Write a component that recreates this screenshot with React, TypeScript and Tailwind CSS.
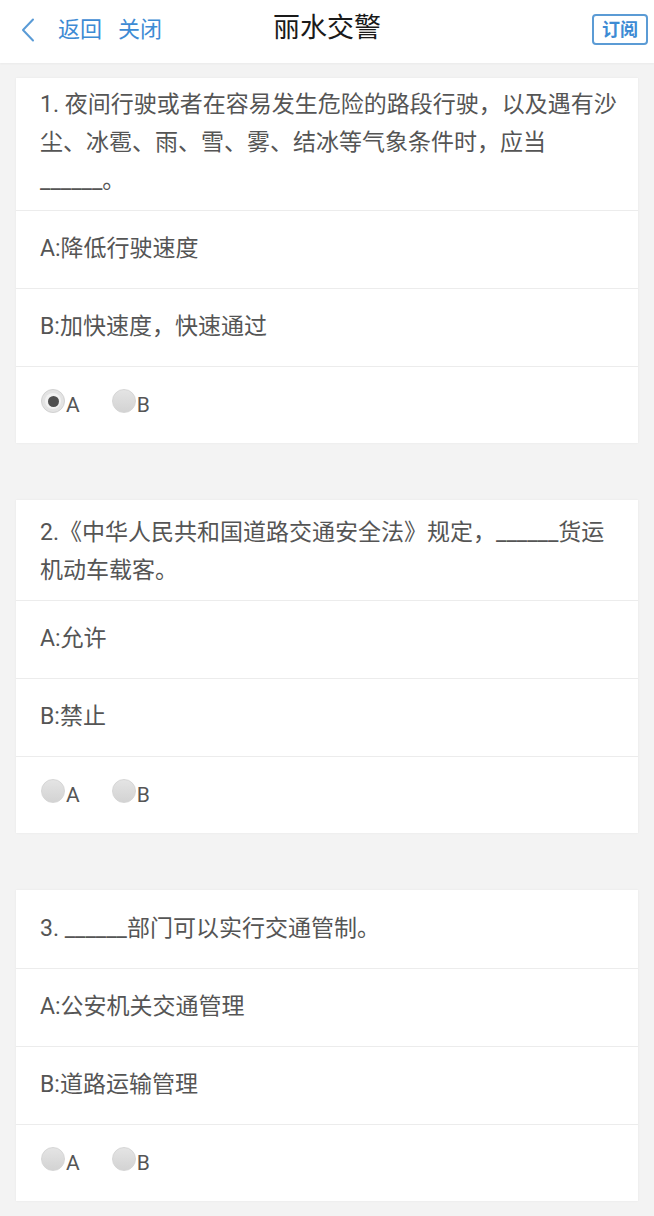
import React from "react";

type Q = {
  q: React.ReactNode;
  a: string;
  b: string;
  sel?: "A" | "B";
  qClass: string;
};

const Blank = () => <span>______</span>;

const questions: Q[] = [
  {
    q: (
      <>
        1. 夜间行驶或者在容易发生危险的路段行驶，以及遇有沙尘、冰雹、雨、雪、雾、结冰等气象条件时，应当
        <Blank />。
      </>
    ),
    a: "A:降低行驶速度",
    b: "B:加快速度，快速通过",
    sel: "A",
    qClass: "pt-[8px] pb-[10px]",
  },
  {
    q: (
      <>
        2.《中华人民共和国道路交通安全法》规定，<Blank />货运机动车载客。
      </>
    ),
    a: "A:允许",
    b: "B:禁止",
    qClass: "pt-[14px] pb-[10px]",
  },
  {
    q: (
      <>
        3. <Blank />部门可以实行交通管制。
      </>
    ),
    a: "A:公安机关交通管理",
    b: "B:道路运输管理",
    qClass: "h-[78px] flex items-center",
  },
];

function Radio({ label, checked }: { label: string; checked?: boolean }) {
  return (
    <div className="flex items-end">
      <div
        className={`w-[24px] h-[24px] rounded-full flex items-center justify-center ${
          checked
            ? "bg-[#e3e3e3] border border-[#d2d2d2]"
            : "bg-gradient-to-b from-[#e4e4e4] to-[#d3d3d3] border border-[#d6d6d6]"
        }`}
      >
        {checked && (
          <div className="w-[16px] h-[16px] rounded-full bg-[#f2f2f2] flex items-center justify-center">
            <div className="w-[11px] h-[11px] rounded-full bg-[#505050]" />
          </div>
        )}
      </div>
      <span className="text-[21px] leading-[15px] text-[#555] ml-[1px]">{label}</span>
    </div>
  );
}

function Card({ item }: { item: Q }) {
  return (
    <div className="mx-[16px] bg-white shadow-[0_0_2px_rgba(0,0,0,0.06)]">
      <div className={`pl-[24px] pr-[12px] text-[23px] leading-[38px] text-[#555] ${item.qClass}`}>
        <div>{item.q}</div>
      </div>
      <div className="h-[78px] flex items-center px-[24px] border-t border-[#ececec] text-[23px] text-[#555]">
        {item.a}
      </div>
      <div className="h-[78px] flex items-center px-[24px] border-t border-[#ececec] text-[23px] text-[#555]">
        {item.b}
      </div>
      <div className="h-[77px] flex items-center px-[25px] border-t border-[#ececec] gap-[32px] pb-[8px]">
        <Radio label="A" checked={item.sel === "A"} />
        <Radio label="B" checked={item.sel === "B"} />
      </div>
    </div>
  );
}

export default function App() {
  return (
    <div
      className="w-[654px] h-[1216px] overflow-hidden bg-[#f3f3f3]"
      style={{ fontFamily: 'Roboto, "Noto Sans CJK SC", sans-serif' }}
    >
      <div className="h-[63px] bg-white flex items-center relative shadow-[0_1px_2px_rgba(0,0,0,0.04)]">
        <div className="flex items-center pl-[21px] gap-[16px] text-[#3d8bd4] text-[22px] pb-[4px]">
          <svg width="14" height="24" viewBox="0 0 14 24" className="mr-[7px]">
            <path d="M12 1.5 L2 12 L12 22.5" fill="none" stroke="#5a9bd6" strokeWidth="2" strokeLinecap="round" strokeLinejoin="round" />
          </svg>
          <span>返回</span>
          <span>关闭</span>
        </div>
        <div className="absolute left-0 right-0 top-[10px] text-center text-[27px] leading-[36px] text-[#1a1a1a] pointer-events-none">
          丽水交警
        </div>
        <div className="ml-auto mr-[6px] mb-[4px] border-2 border-[#5b9bd5] rounded-[4px] px-[8px] h-[31px] flex items-center text-[18px] font-bold text-[#3d8bd4]">
          订阅
        </div>
      </div>
      <div className="pt-[15px] flex flex-col gap-[57px]">
        {questions.map((q, i) => (
          <Card key={i} item={q} />
        ))}
      </div>
    </div>
  );
}
